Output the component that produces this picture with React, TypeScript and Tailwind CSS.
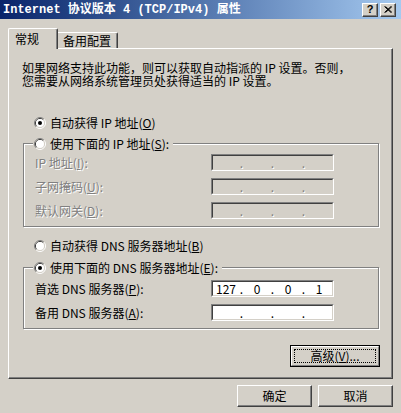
import React from "react";

function Radio({ checked }: { checked?: boolean }) {
  return (
    <svg width="12" height="12" viewBox="0 0 12 12" className="shrink-0">
      <path d="M2.11 9.89 A5.5 5.5 0 0 1 9.89 2.11" stroke="#808080" fill="none" />
      <path d="M9.89 2.11 A5.5 5.5 0 0 1 2.11 9.89" stroke="#ffffff" fill="none" />
      <path d="M2.82 9.18 A4.5 4.5 0 0 1 9.18 2.82" stroke="#404040" fill="none" />
      <path d="M9.18 2.82 A4.5 4.5 0 0 1 2.82 9.18" stroke="#d4d0c8" fill="none" />
      <circle cx="6" cy="6" r="4" fill="#ffffff" />
      {checked && <circle cx="6" cy="6" r="2" fill="#000000" />}
    </svg>
  );
}

function Hot({ k }: { k: string }) {
  return (
    <>
      (<span className="underline underline-offset-[1px]">{k}</span>)
    </>
  );
}

function IpBox({ values, disabled }: { values: string[]; disabled?: boolean }) {
  const txt = disabled ? "text-[#808080] [text-shadow:1px_1px_0_#ffffff]" : "text-black";
  return (
    <div
      className={`w-[123px] h-[17px] border border-t-[#808080] border-l-[#808080] border-b-white border-r-white ${
        disabled ? "bg-[#d4d0c8]" : "bg-white"
      }`}
    >
      <div className="h-full border border-t-[#404040] border-l-[#404040] border-b-[#d4d0c8] border-r-[#d4d0c8] flex items-center leading-[13px]">
        {values.map((v, i) => (
          <React.Fragment key={i}>
            <span className={`flex-1 text-center ${txt}`}>{v}</span>
            {i < 3 && <span className={`w-[5px] text-center ${txt}`}>.</span>}
          </React.Fragment>
        ))}
      </div>
    </div>
  );
}

function Row({ label, values, disabled }: { label: React.ReactNode; values: string[]; disabled?: boolean }) {
  return (
    <div className="flex items-center h-[17px]">
      <div
        className={`w-[176px] leading-[14px] whitespace-nowrap ${
          disabled ? "text-[#808080] [text-shadow:1px_1px_0_#ffffff]" : "text-black"
        }`}
      >
        {label}
      </div>
      <IpBox values={values} disabled={disabled} />
    </div>
  );
}

function Group({ header, children }: { header: React.ReactNode; children: React.ReactNode }) {
  return (
    <div className="ml-[14px] w-[356px] border border-[#808080] shadow-[inset_1px_1px_0_#ffffff,1px_1px_0_#ffffff] flex flex-col">
      <div className="-mt-[8px] ml-[9px] self-start bg-[#d4d0c8] pl-[1px] pr-[4px] h-[15px] flex items-center gap-[4px] whitespace-nowrap leading-[14px]">
        {header}
      </div>
      {children}
    </div>
  );
}

function RaisedButton({ children, className = "" }: { children: React.ReactNode; className?: string }) {
  return (
    <div
      className={`border border-t-white border-l-white border-r-[#404040] border-b-[#404040] shadow-[inset_-1px_-1px_0_#808080] bg-[#d4d0c8] flex items-center justify-center ${className}`}
    >
      {children}
    </div>
  );
}

export default function App() {
  return (
    <div className="w-[401px] h-[413px] bg-[#d4d0c8] overflow-hidden flex flex-col text-[12px] text-black [font-family:'Noto_Sans_CJK_SC',sans-serif]">
      {/* Title bar */}
      <div className="h-[19px] flex items-center bg-gradient-to-r from-[#0a246a] to-[#a6caf0] pl-[3px] pr-[5px]">
        <div className="flex-1 text-white font-bold text-[12px] leading-[14px] whitespace-nowrap [font-family:'Liberation_Mono','Noto_Sans_CJK_SC',monospace]">
          Internet 协议版本 4 (TCP/IPv4) 属性
        </div>
        <div className="flex gap-[2px]">
          <RaisedButton className="w-[16px] h-[14px]">
            <span className="font-bold text-[11px] leading-[11px] [font-family:'Liberation_Sans',sans-serif]">?</span>
          </RaisedButton>
          <RaisedButton className="w-[16px] h-[14px]">
            <svg width="8" height="7" viewBox="0 0 8 7">
              <path d="M0.5 0.5 L7 6.5 M1.5 0.5 L8 6.5 M7 0.5 L0.5 6.5 M8 0.5 L1.5 6.5" stroke="#000" strokeWidth="1" fill="none" />
            </svg>
          </RaisedButton>
        </div>
      </div>

      {/* Tabs */}
      <div className="flex pl-[8px] mt-[9px] h-[20px] items-end">
        <div className="relative z-10 -mb-px h-[21px] w-[50px] bg-[#d4d0c8] border-l border-t border-r border-l-white border-t-white border-r-[#404040] rounded-tl-[2px] rounded-tr-[2px] shadow-[inset_-1px_0_0_#808080] flex items-start pt-[3px] pl-[6px] leading-[14px]">
          常规
        </div>
        <div className="h-[16px] w-[60px] bg-[#d4d0c8] border-t border-r border-t-white border-r-[#404040] rounded-tr-[2px] shadow-[inset_-1px_0_0_#808080] flex items-start pt-[1px] pl-[5px] leading-[14px]">
          备用配置
        </div>
      </div>

      {/* Panel */}
      <div className="ml-[8px] w-[385px] h-[331px] border border-t-white border-l-white border-r-[#404040] border-b-[#404040] shadow-[inset_-1px_-1px_0_#808080] flex flex-col">
        <div className="mt-[12px] ml-[13px] flex flex-col whitespace-nowrap">
          <div className="h-[13px] leading-[13px]">如果网络支持此功能，则可以获取自动指派的 IP 设置。否则，</div>
          <div className="h-[13px] leading-[13px]">您需要从网络系统管理员处获得适当的 IP 设置。</div>
        </div>

        <div className="mt-[28px] ml-[25px] h-[16px] flex items-center gap-[4px] leading-[14px]">
          <Radio checked />
          <span>
            自动获得 IP 地址<Hot k="O" />
          </span>
        </div>

        <div className="mt-[12px]">
          <Group
            header={
              <>
                <Radio />
                <span>
                  使用下面的 IP 地址<Hot k="S" />:
                </span>
              </>
            }
          >
            <div className="mt-[3px] pl-[11px] pb-[7px] flex flex-col gap-[7px]">
              <Row
                disabled
                label={
                  <>
                    IP 地址<Hot k="I" />:
                  </>
                }
                values={["", "", "", ""]}
              />
              <Row
                disabled
                label={
                  <>
                    子网掩码<Hot k="U" />:
                  </>
                }
                values={["", "", "", ""]}
              />
              <Row
                disabled
                label={
                  <>
                    默认网关<Hot k="D" />:
                  </>
                }
                values={["", "", "", ""]}
              />
            </div>
          </Group>
        </div>

        <div className="mt-[11px] ml-[25px] h-[16px] flex items-center gap-[4px] leading-[14px]">
          <Radio />
          <span>
            自动获得 DNS 服务器地址<Hot k="B" />
          </span>
        </div>

        <div className="mt-[13px]">
          <Group
            header={
              <>
                <Radio checked />
                <span>
                  使用下面的 DNS 服务器地址<Hot k="E" />:
                </span>
              </>
            }
          >
            <div className="mt-[5px] pl-[11px] pb-[7px] flex flex-col gap-[7px]">
              <Row
                label={
                  <>
                    首选 DNS 服务器<Hot k="P" />:
                  </>
                }
                values={["127", "0", "0", "1"]}
              />
              <Row
                label={
                  <>
                    备用 DNS 服务器<Hot k="A" />:
                  </>
                }
                values={["", "", "", ""]}
              />
            </div>
          </Group>
        </div>

        <div className="self-end mr-[12px] mt-[16px] w-[90px] h-[22px] border border-black">
          <div className="h-full border border-t-white border-l-white border-r-[#808080] border-b-[#808080] p-[2px]">
            <div className="h-full border border-dotted border-black flex items-center justify-center leading-[14px]">
              <span>
                高级<Hot k="V" />...
              </span>
            </div>
          </div>
        </div>
      </div>

      {/* Bottom buttons */}
      <div className="flex justify-end gap-[6px] pr-[8px] mt-[6px]">
        <RaisedButton className="w-[75px] h-[22px] leading-[14px]">确定</RaisedButton>
        <RaisedButton className="w-[75px] h-[22px] leading-[14px]">取消</RaisedButton>
      </div>
    </div>
  );
}
